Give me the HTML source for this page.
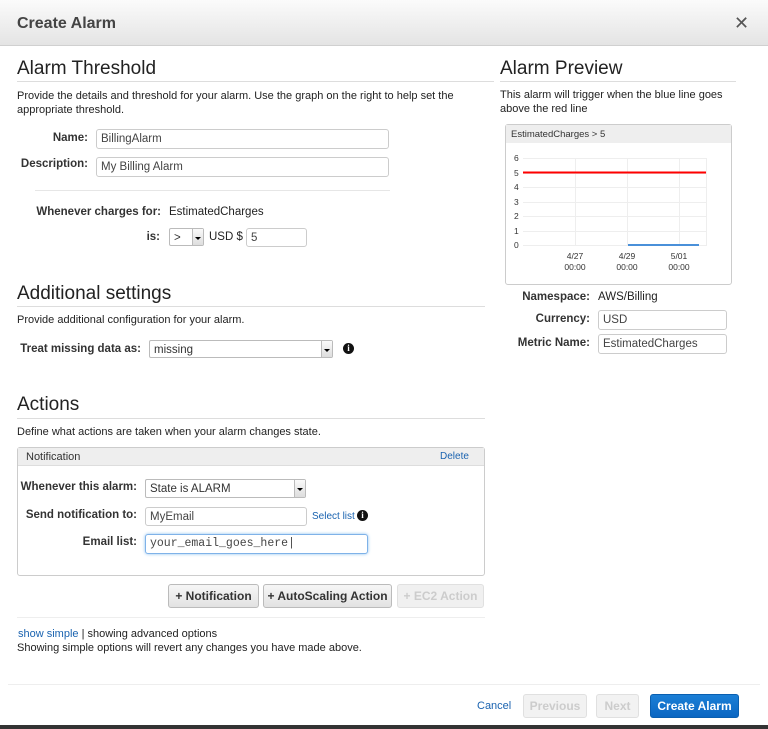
<!DOCTYPE html>
<html><head><style>
*{box-sizing:border-box;margin:0;padding:0}
body{width:768px;height:729px;background:#fff;font-family:"Liberation Sans",sans-serif;font-size:11px;color:#222;position:relative;overflow:hidden}
.a{position:absolute;white-space:nowrap}
.h1{font-size:19px;color:#222}
.hr{position:absolute;height:1px;background:#ddd}
.lbl{position:absolute;font-weight:bold;text-align:right;font-size:11.5px;color:#333}
.in{position:absolute;border:1px solid #ccc;border-radius:3px;background:#fff;padding:2px 4px;font-size:11.5px;color:#444;line-height:14px}
.sel{position:absolute;border:1px solid #bbb;border-radius:2px;background:#fff;font-size:11.5px;color:#333;padding:2px 4px;line-height:14px}
.sel:after{content:"";position:absolute;right:0;top:0;bottom:0;width:10px;border-left:1px solid #bbb;background:linear-gradient(#fafafa,#ddd)}
.sel i{position:absolute;right:2px;top:8px;z-index:2;border-left:3px solid transparent;border-right:3px solid transparent;border-top:3px solid #000}
.info{position:absolute;width:11px;height:11px;border-radius:50%;background:#111;color:#fff;font-size:9px;font-weight:bold;text-align:center;line-height:11px;font-family:"Liberation Serif",serif}
.btn{position:absolute;border:1px solid #bbb;border-radius:3px;background:linear-gradient(#f6f6f6,#e2e2e2);font-weight:bold;font-size:12px;text-align:center;color:#333}
.lk{color:#1a63b0}
</style></head><body>
<div class="a" style="left:0;top:0;width:768px;height:46px;background:linear-gradient(#fbfbfb,#e4e4e4);border-bottom:1px solid #d0d0d0"></div>
<div class="a" style="left:17px;top:15px;font-size:16px;font-weight:bold;color:#444">Create Alarm</div>
<div class="a" style="left:734px;top:13px;font-size:18px;color:#555">✕</div>

<div class="a h1" style="left:17px;top:58px">Alarm Threshold</div>
<div class="hr" style="left:17px;top:81px;width:477px"></div>
<div class="a" style="left:17px;top:89px;line-height:14px">Provide the details and threshold for your alarm. Use the graph on the right to help set the<br>appropriate threshold.</div>
<div class="lbl" style="left:0;width:88px;top:132px">Name:</div>
<div class="in" style="left:96px;top:129px;width:293px;height:20px">BillingAlarm</div>
<div class="lbl" style="left:0;width:88px;top:158px">Description:</div>
<div class="in" style="left:96px;top:157px;width:293px;height:20px">My Billing Alarm</div>
<div class="hr" style="left:35px;top:190px;width:355px;background:#e6e6e6"></div>
<div class="lbl" style="left:0;width:161px;top:206px">Whenever charges for:</div>
<div class="a" style="left:169px;top:206px;font-size:11.5px">EstimatedCharges</div>
<div class="lbl" style="left:0;width:160px;top:231px">is:</div>
<div class="sel" style="left:169px;top:228px;width:35px;height:18px">&gt;<i></i></div>
<div class="a" style="left:209px;top:231px;font-size:11.5px">USD $</div>
<div class="in" style="left:246px;top:228px;width:61px;height:19px">5</div>

<div class="a h1" style="left:17px;top:283px">Additional settings</div>
<div class="hr" style="left:17px;top:306px;width:468px"></div>
<div class="a" style="left:17px;top:314px">Provide additional configuration for your alarm.</div>
<div class="lbl" style="left:0;width:141px;top:343px">Treat missing data as:</div>
<div class="sel" style="left:149px;top:340px;width:184px;height:18px">missing<i></i></div>
<div class="info" style="left:343px;top:343px">i</div>

<div class="a h1" style="left:17px;top:394px">Actions</div>
<div class="hr" style="left:17px;top:418px;width:468px"></div>
<div class="a" style="left:17px;top:426px">Define what actions are taken when your alarm changes state.</div>
<div class="a" style="left:17px;top:447px;width:468px;height:129px;border:1px solid #ccc;border-radius:3px"></div>
<div class="a" style="left:18px;top:448px;width:466px;height:18px;background:#eee;border-bottom:1px solid #ddd"></div>
<div class="a" style="left:26px;top:451px;color:#333">Notification</div>
<div class="a lk" style="left:440px;top:451px;font-size:10px">Delete</div>
<div class="lbl" style="left:0;width:137px;top:481px">Whenever this alarm:</div>
<div class="sel" style="left:145px;top:479px;width:161px;height:19px">State is ALARM<i></i></div>
<div class="lbl" style="left:0;width:137px;top:509px">Send notification to:</div>
<div class="in" style="left:145px;top:507px;width:162px;height:19px">MyEmail</div>
<div class="a lk" style="left:312px;top:511px;font-size:10px">Select list</div>
<div class="info" style="left:357px;top:510px">i</div>
<div class="lbl" style="left:0;width:137px;top:536px">Email list:</div>
<div class="in" style="left:145px;top:534px;width:223px;height:20px;border-color:#7fb2e8;box-shadow:0 0 3px #8cc0f0;font-family:'Liberation Mono',monospace;font-size:11.5px">your_email_goes_here|</div>
<div class="btn" style="left:168px;top:584px;width:91px;height:24px;line-height:22px">+ Notification</div>
<div class="btn" style="left:263px;top:584px;width:129px;height:24px;line-height:22px">+ AutoScaling Action</div>
<div class="btn" style="left:397px;top:584px;width:87px;height:24px;line-height:22px;color:#ccc;border-color:#e0e0e0;background:#f0f0f0">+ EC2 Action</div>
<div class="hr" style="left:17px;top:617px;width:468px;background:#eee"></div>
<div class="a" style="left:18px;top:628px"><span class="lk">show simple</span> | showing advanced options</div>
<div class="a" style="left:17px;top:642px">Showing simple options will revert any changes you have made above.</div>

<div class="a h1" style="left:500px;top:58px">Alarm Preview</div>
<div class="hr" style="left:500px;top:81px;width:236px"></div>
<div class="a" style="left:500px;top:88px;line-height:14px">This alarm will trigger when the blue line goes<br>above the red line</div>
<div class="a" style="left:505px;top:124px;width:227px;height:161px;border:1px solid #ccc;border-radius:3px"></div>
<div class="a" style="left:506px;top:125px;width:225px;height:18px;background:#eee"></div>
<div class="a" style="left:511px;top:129px;font-size:9.5px;color:#333">EstimatedCharges &gt; 5</div>
<svg class="a" style="left:505px;top:143px" width="226" height="130">
<g stroke="#eee" stroke-width="1">
<line x1="18" y1="15.5" x2="201" y2="15.5"/><line x1="18" y1="30.5" x2="201" y2="30.5"/><line x1="18" y1="44.5" x2="201" y2="44.5"/><line x1="18" y1="59.5" x2="201" y2="59.5"/><line x1="18" y1="73.5" x2="201" y2="73.5"/><line x1="18" y1="88.5" x2="201" y2="88.5"/><line x1="18" y1="102.5" x2="201" y2="102.5"/>
<line x1="70.5" y1="15" x2="70.5" y2="103"/><line x1="122.5" y1="15" x2="122.5" y2="103"/><line x1="174.5" y1="15" x2="174.5" y2="103"/><line x1="201.5" y1="15" x2="201.5" y2="103"/>
</g>
<line x1="18" y1="29.5" x2="201" y2="29.5" stroke="#f00" stroke-width="2"/>
<line x1="123" y1="102" x2="194" y2="102" stroke="#4a90d9" stroke-width="2"/>
<g font-size="8.5" fill="#333" font-family="Liberation Sans">
<text x="9" y="18">6</text><text x="9" y="33">5</text><text x="9" y="47">4</text><text x="9" y="62">3</text><text x="9" y="76">2</text><text x="9" y="91">1</text><text x="9" y="105">0</text>
<text x="70" y="116" text-anchor="middle">4/27</text><text x="70" y="127" text-anchor="middle">00:00</text>
<text x="122" y="116" text-anchor="middle">4/29</text><text x="122" y="127" text-anchor="middle">00:00</text>
<text x="174" y="116" text-anchor="middle">5/01</text><text x="174" y="127" text-anchor="middle">00:00</text>
</g></svg>
<div class="lbl" style="left:500px;width:90px;top:291px">Namespace:</div>
<div class="a" style="left:598px;top:291px;font-size:11.5px">AWS/Billing</div>
<div class="lbl" style="left:500px;width:90px;top:313px">Currency:</div>
<div class="in" style="left:598px;top:310px;width:129px;height:20px">USD</div>
<div class="lbl" style="left:500px;width:90px;top:337px">Metric Name:</div>
<div class="in" style="left:598px;top:334px;width:129px;height:20px">EstimatedCharges</div>

<div class="hr" style="left:8px;top:684px;width:752px;background:#eee"></div>
<div class="a lk" style="left:477px;top:700px">Cancel</div>
<div class="btn" style="left:523px;top:694px;width:64px;height:24px;line-height:22px;color:#ccc;border-color:#e0e0e0;background:#f2f2f2">Previous</div>
<div class="btn" style="left:596px;top:694px;width:43px;height:24px;line-height:22px;color:#ccc;border-color:#e0e0e0;background:#f2f2f2">Next</div>
<div class="btn" style="left:650px;top:694px;width:89px;height:24px;line-height:22px;color:#fff;border-color:#0a5fb0;background:linear-gradient(#1b7fd6,#0b66c2)">Create Alarm</div>
<div class="a" style="left:0;top:725px;width:768px;height:4px;background:#333"></div>
</body></html>
